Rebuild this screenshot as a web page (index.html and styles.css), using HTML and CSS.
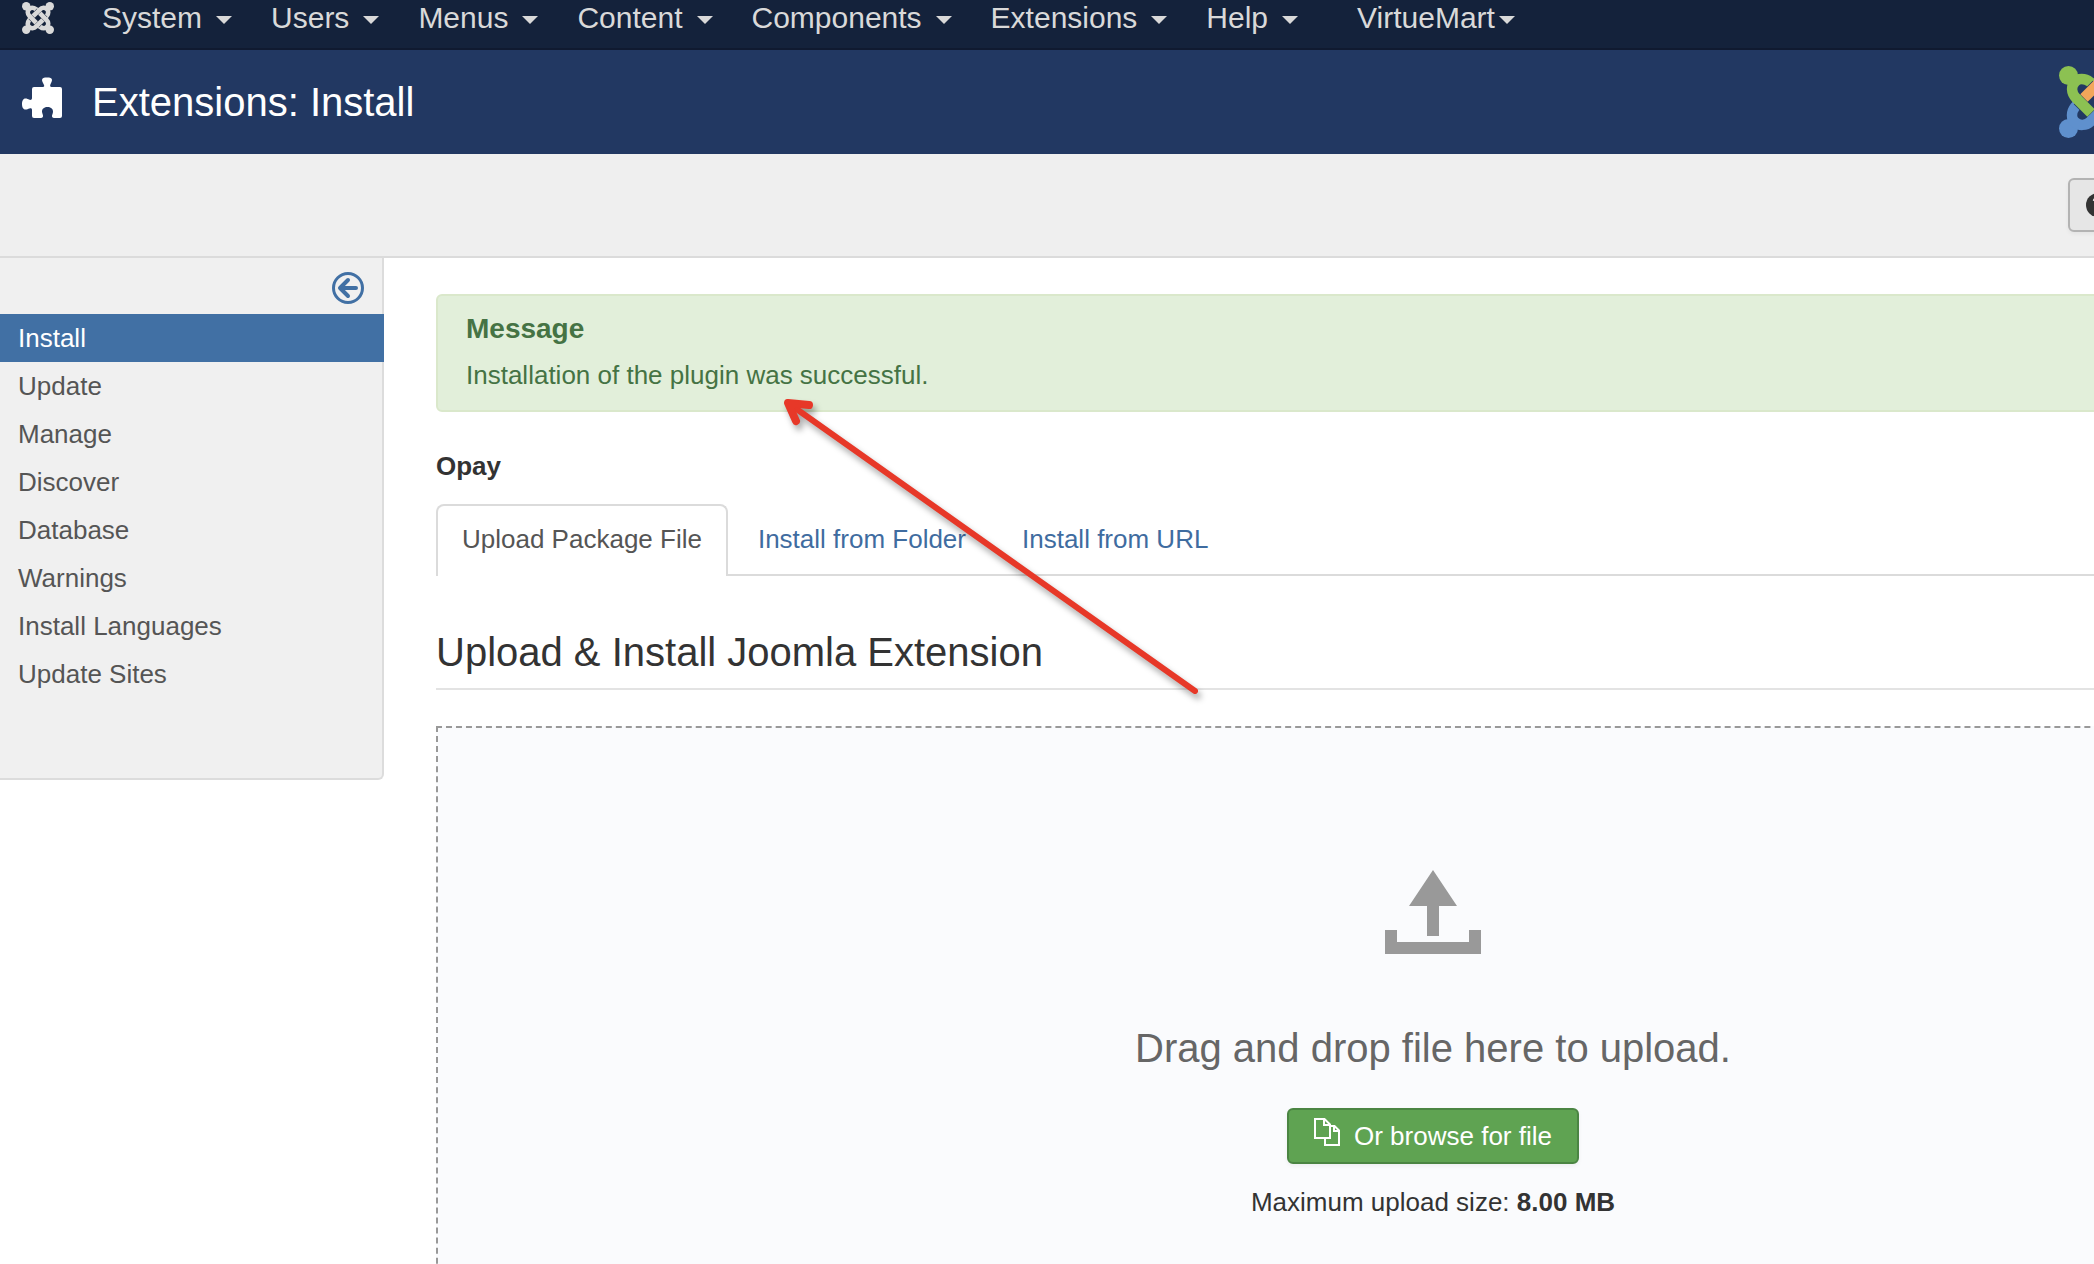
FILE: index.html
```html
<!DOCTYPE html>
<html lang="en">
<head>
<meta charset="utf-8">
<title>Extensions: Install</title>
<link rel="stylesheet" href="styles.css">
</head>
<body>
<svg class="defs" aria-hidden="true">
  <defs>
    <g id="arm-loop">
      <circle cx="9.500" cy="9.500" r="9.500" stroke="none"/>
      <path d="M34 19L31 16C26 12 19 12 16 16C12 20 12 27 17 32L20 35" fill="none" stroke-width="10.500"/>
    </g>
    <path id="arm-gap" d="M19 34L32 47" fill="none" stroke-width="12"/>
    <path id="arm-bar" d="M17 32L32 47" fill="none" stroke-width="10.500"/>
  </defs>
</svg>

<nav class="navbar" aria-label="Main">
  <a class="brand" href="#" aria-label="Joomla">
    <svg width="32" height="32" viewBox="0 0 72 72" aria-hidden="true">
      <g fill="#d9d9d9" stroke="#d9d9d9">
        <use href="#arm-loop"/>
        <use href="#arm-loop" transform="rotate(90 36 36)"/>
        <use href="#arm-loop" transform="rotate(180 36 36)"/>
        <use href="#arm-loop" transform="rotate(270 36 36)"/>
      </g>
      <g stroke="#142039">
        <use href="#arm-gap"/>
        <use href="#arm-gap" transform="rotate(90 36 36)"/>
        <use href="#arm-gap" transform="rotate(180 36 36)"/>
        <use href="#arm-gap" transform="rotate(270 36 36)"/>
      </g>
      <g stroke="#d9d9d9">
        <use href="#arm-bar"/>
        <use href="#arm-bar" transform="rotate(90 36 36)"/>
        <use href="#arm-bar" transform="rotate(180 36 36)"/>
        <use href="#arm-bar" transform="rotate(270 36 36)"/>
      </g>
    </svg>
  </a>
  <ul class="menu">
    <li><a href="#">System<span class="caret"></span></a></li>
    <li><a href="#">Users<span class="caret"></span></a></li>
    <li><a href="#">Menus<span class="caret"></span></a></li>
    <li><a href="#">Content<span class="caret"></span></a></li>
    <li><a href="#">Components<span class="caret"></span></a></li>
    <li><a href="#">Extensions<span class="caret"></span></a></li>
    <li><a href="#">Help<span class="caret"></span></a></li>
    <li class="menu-extra"><a href="#">VirtueMart<span class="caret"></span></a></li>
  </ul>
</nav>

<header class="header">
  <svg class="puzzle" width="40" height="42" viewBox="0 0 40 42" aria-hidden="true">
    <path fill="#fff" d="M12 10H21C22 10 22.500 9 22 8C21 5.500 20 4.500 20 3C20 1 22 .500 25 .500S30 1 30 3C30 4.500 29 5.500 28.200 8C28 9 28.300 10 29.500 10H38Q40 10 40 12V39Q40 41 38 41H32C30.500 41 29.800 40 30 38.500C30.500 37 31 36 31 34.500C31 31.500 28.500 30 25.500 30S20 31.500 20 34.500C20 36 20.800 37 21 38.500C21.200 40 20.500 41 19 41H12Q10 41 10 39V33C10 31.500 9 31 7.500 31.500C6 32 5 32.500 3.500 32.500C1 32.500 0 30 0 27S1 21.500 3.500 21.500C5 21.500 6 22.200 7.500 22.800C9 23.200 10 22.500 10 21V12Q10 10 12 10Z"/>
  </svg>
  <h1 class="page-title">Extensions: Install</h1>
  <svg class="logo" width="72" height="72" viewBox="0 0 72 72" aria-hidden="true">
    <use href="#arm-loop" fill="#8cc152" stroke="#8cc152"/>
    <use href="#arm-loop" fill="#f2a65a" stroke="#f2a65a" transform="rotate(90 36 36)"/>
    <use href="#arm-loop" fill="#ee5f4b" stroke="#ee5f4b" transform="rotate(180 36 36)"/>
    <use href="#arm-loop" fill="#5f90cd" stroke="#5f90cd" transform="rotate(270 36 36)"/>
    <g stroke="#223862">
      <use href="#arm-gap"/>
      <use href="#arm-gap" transform="rotate(90 36 36)"/>
      <use href="#arm-gap" transform="rotate(180 36 36)"/>
      <use href="#arm-gap" transform="rotate(270 36 36)"/>
    </g>
    <use href="#arm-bar" stroke="#5f90cd" transform="rotate(270 36 36)"/>
    <use href="#arm-bar" stroke="#ee5f4b" transform="rotate(180 36 36)"/>
    <use href="#arm-bar" stroke="#f2a65a" transform="rotate(90 36 36)"/>
    <use href="#arm-bar" stroke="#8cc152"/>
  </svg>
</header>

<div class="subhead">
  <button class="tool-button" type="button" aria-label="Help">
    <svg width="24" height="24" viewBox="0 0 24 24" aria-hidden="true">
      <circle cx="12" cy="12" r="12" fill="#333"/>
      <path d="M8 8C8.500 4.500 15.500 4.500 15.500 8.500C15.500 11 12 11.500 12 14M12 16.500V19" fill="none" stroke="#e6e6e6" stroke-width="2.500"/>
    </svg>
  </button>
</div>

<div class="body">
  <aside class="sidebar">
    <div class="sidebar-top">
      <button class="toggle" type="button" aria-label="Hide the sidebar">
        <svg width="32" height="32" viewBox="0 0 32 32" fill="none" stroke="#4170a4" aria-hidden="true">
          <circle cx="16" cy="16" r="14.500" stroke-width="3"/>
          <path d="M24 16H9M16 8L8 16L16 24" stroke-width="4" stroke-linecap="round" stroke-linejoin="round"/>
        </svg>
      </button>
    </div>
    <ul class="side-menu">
      <li><a class="active" href="#">Install</a></li>
      <li><a href="#">Update</a></li>
      <li><a href="#">Manage</a></li>
      <li><a href="#">Discover</a></li>
      <li><a href="#">Database</a></li>
      <li><a href="#">Warnings</a></li>
      <li><a href="#">Install Languages</a></li>
      <li><a href="#">Update Sites</a></li>
    </ul>
  </aside>

  <main class="main">
    <div class="alert" role="status">
      <h4 class="alert-title">Message</h4>
      <p class="alert-text">Installation of the plugin was successful.</p>
    </div>
    <p class="extension-name">Opay</p>
    <ul class="tabs">
      <li><a class="tab active" href="#">Upload Package File</a></li>
      <li><a class="tab" href="#">Install from Folder</a></li>
      <li><a class="tab" href="#">Install from URL</a></li>
    </ul>
    <h2 class="legend">Upload &amp; Install Joomla Extension</h2>
    <section class="dropzone">
      <svg class="upload-icon" width="96" height="84" viewBox="0 0 96 84" fill="#999" aria-hidden="true">
        <path d="M48 0L72 36H54V66H42V36H24ZM0 60H12V72H84V60H96V84H0Z"/>
      </svg>
      <p class="lead">Drag and drop file here to upload.</p>
      <button class="browse" type="button">
        <svg width="26" height="28" viewBox="0 0 26 28" fill="none" stroke="#fff" stroke-width="2" aria-hidden="true">
          <path d="M10 20H1V1H10.500L16 6.500V20H10M10 1V7H16M16 8H20.500L25 12.500V27H11V20M20 8V13H25"/>
        </svg>
        Or browse for file
      </button>
      <p class="limit">Maximum upload size: <strong>8.00 MB</strong></p>
    </section>
    <svg class="pointer" width="430" height="310" viewBox="0 0 430 310" fill="none" stroke="#e73828" stroke-linecap="round" stroke-linejoin="round" aria-hidden="true">
      <path d="M12 12L419 300" stroke-width="6"/>
      <path d="M33 14L12 12L20 30" stroke-width="8"/>
    </svg>
  </main>
</div>
</body>
</html>
```
FILE: styles.css
```css
* {
  box-sizing: border-box;
}

body {
  display: flex;
  flex-direction: column;
  margin: 0;
  height: 100vh;
  overflow: hidden;
  background: #fff;
  color: #333;
  font: 26px/36px "Helvetica Neue", "Liberation Sans", Arial, sans-serif;
}

h1, h2, h4, p, ul {
  margin: 0;
  padding: 0;
}

ul {
  list-style: none;
}

a {
  color: #3f6ca0;
  text-decoration: none;
}

button {
  font: inherit;
  cursor: pointer;
}

svg {
  display: block;
  flex: none;
}

.defs {
  position: absolute;
  width: 0;
  height: 0;
}

/* Top navigation */
.navbar {
  display: flex;
  flex: none;
  align-items: flex-start;
  gap: 48px;
  height: 50px;
  padding: 0 22px;
  background: #14223b;
  border-bottom: 2px solid #101a30;
}

.brand {
  padding-top: 2px;
}

.menu {
  display: flex;
  gap: 39px;
}

.menu a {
  display: flex;
  align-items: center;
  gap: 14px;
  color: #d9d9d9;
  font-size: 30px;
}

.menu-extra {
  padding-left: 20px;
}

.menu .menu-extra a {
  gap: 4px;
}

.caret {
  margin-top: 4px;
  border: 8px solid transparent;
  border-top-color: currentColor;
  border-bottom: 0;
}

/* Title bar */
.header {
  display: flex;
  flex: none;
  align-items: center;
  height: 104px;
  padding-left: 22px;
  overflow: hidden;
  background: #223862;
}

.puzzle {
  margin-bottom: 8px;
}

.page-title {
  flex: 1;
  padding-left: 30px;
  color: #fff;
  font-size: 40px;
  font-weight: 400;
}

.logo {
  margin-right: -37px;
}

/* Toolbar */
.subhead {
  display: flex;
  flex: none;
  justify-content: flex-end;
  padding: 24px 0;
  overflow: hidden;
  background: #efefef;
  border-bottom: 2px solid #dbdbdb;
}

.tool-button {
  width: 100px;
  height: 54px;
  margin-right: -74px;
  padding: 0 16px;
  background: #e6e6e6;
  border: 2px solid #b3b3b3;
  border-radius: 6px;
  box-shadow: 0 2px 4px rgba(0, 0, 0, .05);
}

/* Sidebar */
.body {
  display: flex;
  flex: 1;
  align-items: flex-start;
  min-height: 0;
  overflow: hidden;
}

.sidebar {
  flex: 0 0 384px;
  padding-bottom: 80px;
  background: #f0f0f0;
  border: solid #dcdcdc;
  border-width: 0 2px 2px 0;
  border-bottom-right-radius: 6px;
}

.sidebar-top {
  display: flex;
  justify-content: flex-end;
  padding: 14px 18px 10px;
}

.toggle {
  padding: 0;
  background: none;
  border: 0;
}

.side-menu a {
  display: block;
  padding: 6px 18px;
  color: #555;
}

.side-menu .active {
  margin-right: -2px;
  background: #4170a4;
  color: #fff;
}

/* Content runs on past the right edge of the window */
.main {
  position: relative;
  flex: 1;
  margin-right: -336px;
  padding: 36px 0 0 52px;
}

.alert {
  padding: 15px 28px 17px;
  background: #e2efda;
  border: 2px solid #dae8cb;
  border-radius: 6px;
  color: #457344;
}

.alert-title {
  margin-bottom: 10px;
  font-size: 28px;
}

.extension-name {
  margin: 36px 0 20px;
  font-weight: 700;
}

.tabs {
  display: flex;
  gap: 4px;
  border-bottom: 2px solid #dbdbdb;
}

.tab {
  display: block;
  padding: 15px 24px 17px;
  border: 2px solid transparent;
  border-bottom: 0;
}

.tab.active {
  margin-bottom: -2px;
  padding-bottom: 19px;
  background: #fff;
  border-color: #dbdbdb;
  border-radius: 8px 8px 0 0;
  color: #555;
}

.legend {
  margin: 40px 0 36px;
  border-bottom: 2px solid #e3e3e3;
  font-size: 40px;
  font-weight: 400;
  line-height: 72px;
}

.dropzone {
  display: flex;
  flex-direction: column;
  align-items: center;
  padding: 142px 0;
  background: #fafbfd;
  border: 2px dashed #999;
}

.lead {
  margin: 64px 0 30px;
  color: #666;
  font-size: 40px;
  line-height: 60px;
}

.browse {
  display: flex;
  gap: 14px;
  padding: 8px 25px;
  background: #5fa352;
  border: 2px solid #4b8543;
  border-radius: 6px;
  box-shadow: 0 2px 4px rgba(0, 0, 0, .05);
  color: #fff;
}

.limit {
  margin-top: 20px;
}

/* Arrow drawn over the content */
.pointer {
  position: absolute;
  top: 133px;
  left: 392px;
  filter: drop-shadow(3px 5px 3px rgba(0, 0, 0, .35));
}
```
